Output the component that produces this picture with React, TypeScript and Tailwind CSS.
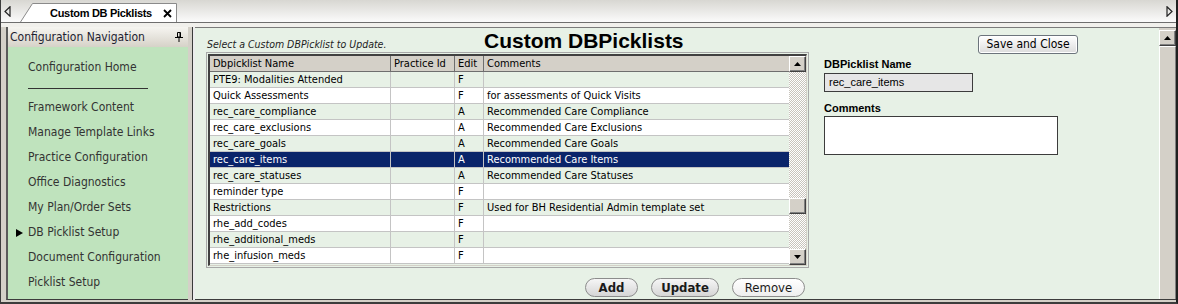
import React from "react";

const rows: [string, string, string, string][] = [
  ["PTE9: Modalities Attended", "", "F", ""],
  ["Quick Assessments", "", "F", "for assessments of Quick Visits"],
  ["rec_care_compliance", "", "A", "Recommended Care Compliance"],
  ["rec_care_exclusions", "", "A", "Recommended Care Exclusions"],
  ["rec_care_goals", "", "A", "Recommended Care Goals"],
  ["rec_care_items", "", "A", "Recommended Care Items"],
  ["rec_care_statuses", "", "A", "Recommended Care Statuses"],
  ["reminder type", "", "F", ""],
  ["Restrictions", "", "F", "Used for BH Residential Admin template set"],
  ["rhe_add_codes", "", "F", ""],
  ["rhe_additional_meds", "", "F", ""],
  ["rhe_infusion_meds", "", "F", ""],
];

const navItems = [
  "Manage Template Links",
  "Practice Configuration",
  "Office Diagnostics",
  "My Plan/Order Sets",
  "DB Picklist Setup",
  "Document Configuration",
  "Picklist Setup",
];

const raised =
  "bg-[#d4d0c8] border border-t-white border-l-white border-r-[#404040] border-b-[#404040] shadow-[inset_-1px_-1px_0_#808080]";

function UpTri() {
  return (
    <svg width="7" height="4" viewBox="0 0 7 4">
      <path d="M0 4 L3.5 0 L7 4 Z" fill="#000" />
    </svg>
  );
}
function DownTri() {
  return (
    <svg width="7" height="4" viewBox="0 0 7 4">
      <path d="M0 0 L3.5 4 L7 0 Z" fill="#000" />
    </svg>
  );
}

export default function App() {
  return (
    <div className="w-[1178px] h-[304px] overflow-hidden flex flex-col bg-[#d4d0c8] border-l border-l-[#3c3c3c] border-r-2 border-r-[#202020] border-b-2 border-b-[#3c3c3c] font-['DejaVu_Sans_Condensed','DejaVu_Sans',sans-serif]">
      {/* Tab strip */}
      <div className="h-[23px] shrink-0 flex items-end bg-linear-to-b from-[#d8d7d2] to-[#fbfbfb] border-b border-b-[#6e6e6e]">
        <div className="w-[19px] h-full flex items-center pl-[3px] pt-[1px]">
          <svg width="7" height="11" viewBox="0 0 7 11">
            <path d="M6 0.8 L1 5.5 L6 10.2 Z" fill="none" stroke="#222" strokeWidth="1.2" />
          </svg>
        </div>
        <div className="relative w-[157px] h-[19px] flex items-center">
          <svg className="absolute inset-0" width="157" height="19" viewBox="0 0 157 19">
            <path d="M0.5 19 L12.5 0.5 L156.5 0.5 L156.5 19" fill="#ffffff" stroke="#8a8a8a" />
          </svg>
          <span className="relative ml-[30px] text-[11px] font-bold tracking-[-0.3px] text-black leading-[18px] whitespace-nowrap font-['Liberation_Sans',Arial,sans-serif]">
            Custom DB Picklists
          </span>
          <svg className="relative ml-auto mr-[5px] mt-[2px]" width="9" height="9" viewBox="0 0 9 9">
            <path d="M1 1 L8 8 M8 1 L1 8" stroke="#000" strokeWidth="1.8" />
          </svg>
        </div>
        <div className="flex-1" />
        <div className="w-[12px] h-full flex items-center pl-[2px] pt-[1px]">
          <svg width="7" height="11" viewBox="0 0 7 11">
            <path d="M1 0.8 L6 5.5 L1 10.2 Z" fill="none" stroke="#222" strokeWidth="1.2" />
          </svg>
        </div>
      </div>

      {/* Body */}
      <div className="flex-1 flex flex-col min-h-0">
        <div className="h-[4px] shrink-0 bg-[#f1f0ec]" />
        <div className="flex-1 flex min-h-0 pb-[2px]">
          {/* Navigation */}
          <div className="pl-[5px] flex">
            <div className="w-[182px] flex flex-col border-l-2 border-l-[#5a5a5a] border-b border-b-[#3c3c3c]">
              <div className="h-[20px] shrink-0 flex items-center justify-between pl-[2px] pr-[5px] bg-linear-to-b from-[#f6f5f1] to-[#d6d2c8]">
                <span className="text-[12px] text-[#1e1e32] leading-[20px] whitespace-nowrap">Configuration Navigation</span>
                <svg width="8" height="10" viewBox="0 0 8 10">
                  <path d="M2.5 0.5 H5.5 V5 H2.5 Z" fill="none" stroke="#000" strokeWidth="1" />
                  <path d="M5 0.5 V5" stroke="#000" strokeWidth="1" />
                  <path d="M0 5.5 H8" stroke="#000" strokeWidth="1" />
                  <path d="M4 5.5 V10" stroke="#000" strokeWidth="1" />
                </svg>
              </div>
              <div className="flex-1 bg-[#bfe3bd] flex flex-col pt-[8px] text-[12px] text-[#333333]">
                <div className="h-[25px] leading-[25px] pl-[20px] whitespace-nowrap">Configuration Home</div>
                <div className="ml-[20px] mt-[8px] w-[120px] h-px bg-[#333333]" />
                <div className="h-[25px] leading-[25px] pl-[20px] mt-[6px] whitespace-nowrap">Framework Content</div>
                {navItems.map((t) => (
                  <div key={t} className="h-[25px] flex items-center whitespace-nowrap">
                    <div className="w-[20px] pl-[8px] flex items-center">
                      {t === "DB Picklist Setup" && (
                        <svg width="7" height="8" viewBox="0 0 7 8">
                          <path d="M0 0 L7 4 L0 8 Z" fill="#000" />
                        </svg>
                      )}
                    </div>
                    <span className="leading-[25px]">{t}</span>
                  </div>
                ))}
              </div>
            </div>
          </div>

          {/* Splitter */}
          <div className="w-[7px] flex">
            <div className="w-[4px] bg-[#d4d0c8]" />
            <div className="w-px bg-[#3a3a3a]" />
            <div className="w-[2px] bg-[#ececec]" />
          </div>

          {/* Main panel */}
          <div className="flex-1 flex border-t border-t-[#7a7a7a] border-b border-b-[#3c3c3c] bg-[#e7f1e6] min-w-0">
            <div className="flex-1 flex pl-[11px] min-w-0">
              {/* Left column */}
              <div className="w-[603px] shrink-0 flex flex-col">
                <div className="h-[24px] flex items-start">
                  <div className="w-[278px] pl-[1px] pt-[10px] text-[10.5px] italic leading-[12px] text-[#222] whitespace-nowrap">
                    Select a Custom DBPicklist to Update.
                  </div>
                  <div className="text-[21px] font-bold leading-[26px] text-black whitespace-nowrap font-['Liberation_Sans',Arial,sans-serif]">
                    Custom DBPicklists
                  </div>
                </div>

                {/* Table frame */}
                <div className="border border-[#a8a8a8] p-px">
                  <div className="border-t-2 border-l-2 border-t-[#404040] border-l-[#404040] border-r border-b border-r-[#d4d0c8] border-b-[#d4d0c8] h-[212px] flex">
                    <div className="w-[579px] flex flex-col text-[11px]">
                      <div className="flex h-[16px] bg-[#d4d0c8] border-b border-b-[#6e6e6e] text-black">
                        <div className="w-[181px] shrink-0 border-r border-r-[#6e6e6e] pl-[3px] leading-[15px]">Dbpicklist Name</div>
                        <div className="w-[64px] shrink-0 border-r border-r-[#6e6e6e] pl-[3px] leading-[15px]">Practice Id</div>
                        <div className="w-[29px] shrink-0 border-r border-r-[#6e6e6e] pl-[3px] leading-[15px]">Edit</div>
                        <div className="flex-1 pl-[3px] leading-[15px]">Comments</div>
                      </div>
                      {rows.map((r, i) => {
                        const sel = i === 5;
                        const bg = sel
                          ? "bg-[#0a246a] text-white"
                          : i % 2 === 0
                          ? "bg-[#e7f1e6] text-black"
                          : "bg-white text-black";
                        return (
                          <div key={i} className={`flex h-[16px] border-b border-b-[#c4c4c4] ${bg}`}>
                            <div className="w-[181px] shrink-0 border-r border-r-[#c4c4c4] pl-[3px] leading-[15px] whitespace-nowrap overflow-hidden">{r[0]}</div>
                            <div className="w-[64px] shrink-0 border-r border-r-[#c4c4c4] pl-[3px] leading-[15px]">{r[1]}</div>
                            <div className="w-[29px] shrink-0 border-r border-r-[#c4c4c4] pl-[3px] leading-[15px]">{r[2]}</div>
                            <div className="flex-1 pl-[3px] leading-[15px] whitespace-nowrap overflow-hidden">{r[3]}</div>
                          </div>
                        );
                      })}
                    </div>
                    {/* Table scrollbar */}
                    <div className="w-[17px] flex flex-col">
                      <div className={`h-[16px] shrink-0 flex items-center justify-center ${raised}`}>
                        <UpTri />
                      </div>
                      <div className="h-[126px] bg-[image:repeating-conic-gradient(#ffffff_0_25%,#c8c4bc_0_50%)] bg-[length:2px_2px]" />
                      <div className={`h-[16px] shrink-0 ${raised}`} />
                      <div className="flex-1 bg-[image:repeating-conic-gradient(#ffffff_0_25%,#c8c4bc_0_50%)] bg-[length:2px_2px]" />
                      <div className={`h-[16px] shrink-0 flex items-center justify-center ${raised}`}>
                        <DownTri />
                      </div>
                    </div>
                  </div>
                </div>

                {/* Buttons */}
                <div className="mt-[10px] flex justify-end gap-[13px] pr-[4px] text-[13px] text-[#1a1a1a]">
                  <button className="w-[53px] h-[19px] rounded-full border border-[#8c8c8c] bg-linear-to-b from-[#f6f6f6] to-[#d6d6d6] leading-[17px] font-semibold">Add</button>
                  <button className="w-[68px] h-[19px] rounded-full border border-[#8c8c8c] bg-linear-to-b from-[#f6f6f6] to-[#d6d6d6] leading-[17px] font-semibold">Update</button>
                  <button className="w-[73px] h-[19px] rounded-full border border-[#8c8c8c] bg-linear-to-b from-[#ffffff] to-[#eeeeee] leading-[17px]">Remove</button>
                </div>
              </div>

              {/* Right column */}
              <div className="ml-[15px] flex flex-col">
                <button className="ml-[154px] mt-[7px] w-[100px] h-[19px] rounded-[3px] border border-[#6c747c] bg-linear-to-b from-[#ffffff] to-[#dcdcdc] shadow-[inset_0_0_0_1px_#ffffff] text-[12px] leading-[17px] text-black">
                  Save and Close
                </button>
                <div className="mt-[4px] text-[11px] font-bold leading-[13px] text-black font-['Liberation_Sans',Arial,sans-serif]">DBPicklist Name</div>
                <div className="mt-[2px] w-[149px] h-[19px] border border-[#3c3c3c] bg-[#e6e6e6] pl-[4px] text-[11px] leading-[17px] text-black font-['Liberation_Sans',Arial,sans-serif]">
                  rec_care_items
                </div>
                <div className="mt-[10px] text-[11px] font-bold leading-[13px] text-black font-['Liberation_Sans',Arial,sans-serif]">Comments</div>
                <div className="mt-[1px] w-[234px] h-[39px] border border-[#3c3c3c] bg-white" />
              </div>
            </div>

            {/* Main scrollbar */}
            <div className="w-[17px] shrink-0 flex flex-col bg-[#d4d0c8] pt-[2px]">
              <div className={`h-[16px] shrink-0 flex items-center justify-center ${raised}`}>
                <UpTri />
              </div>
              <div className="flex-1 bg-[#d4d0c8] border-l border-t border-l-white border-t-white border-r border-r-[#808080]" />
            </div>
          </div>
        </div>
      </div>
    </div>
  );
}
